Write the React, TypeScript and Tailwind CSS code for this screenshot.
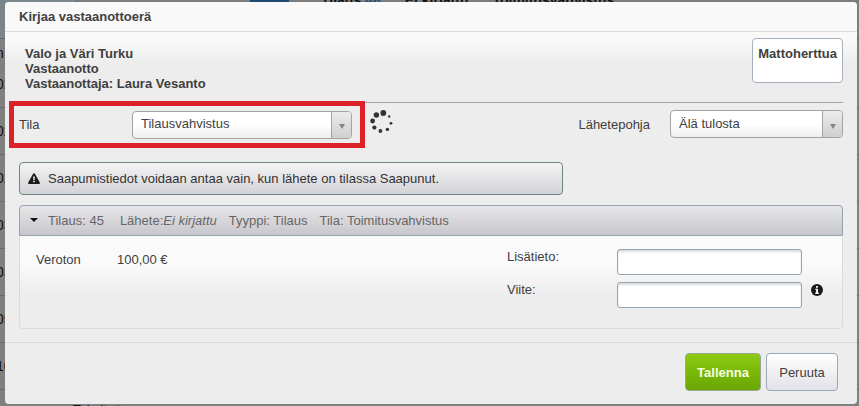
import type { ReactNode } from 'react'
import { useState } from 'react'

// Rows of the list page that stays visible round the edges of the dialog.
const BACKDROP_ROWS = ['02:', '02:', '02:', '03:', '03:', '05:', '10']

export default function App() {
  return (
    <div className="relative min-h-screen overflow-hidden bg-[#808080] font-['Liberation_Sans',Arial,sans-serif] text-[13px] leading-[15px] text-[#404040]">
      <Backdrop />
      <ReceiveDialog />
    </div>
  )
}

function Backdrop() {
  return (
    <div aria-hidden="true" className="absolute inset-0 overflow-hidden text-[#111]">
      <div className="flex h-[39px] border-b border-[#666] bg-[#7b858c]">
        <div className="w-[77px] border-r border-[#666]" />
        <div className="w-[173px] bg-[#7d7d7d]" />
        <div className="h-full w-[39px] bg-[#1d4a70]" />
        <div className="-mt-2 flex flex-1 gap-6 bg-[#7d7d7d] pl-8 text-[14px] leading-4 font-bold">
          <span>
            Tilaus <span className="text-[#1d4a70]">48</span>
          </span>
          <span>Ei kirjattu</span>
          <span>Toimitusvahvistus</span>
        </div>
      </div>
      <div className="flex h-[22px] items-end">
        <span className="-ml-1 text-[14px]">n</span>
      </div>
      {BACKDROP_ROWS.map((text, i) => (
        <div key={i} className="flex h-[47px] items-center border-b border-[#6a6a6a]">
          <span className="-ml-1 text-[14px]">{text}</span>
        </div>
      ))}
      <div className="pt-3 pl-[73px]">Toimitettu</div>
    </div>
  )
}

function ReceiveDialog() {
  const [lisatieto, setLisatieto] = useState('')
  const [viite, setViite] = useState('')

  return (
    <div
      role="dialog"
      aria-modal="true"
      aria-labelledby="dialog-title"
      className="relative mt-[2px] mr-[2px] ml-[5px] rounded-[4px] bg-[#ededed]"
    >
      <header className="rounded-t-[4px] border-b border-[#dcdcdc] bg-[#f9f9f9] px-3.5 pt-[7px] pb-[7px]">
        <h1 id="dialog-title" className="font-bold">
          Kirjaa vastaanottoerä
        </h1>
      </header>

      <div className="bg-linear-to-b from-[#f9f9f9] from-[8px] to-[#ededed] to-[32px] px-3.5 pt-1.5 pb-[13px]">
        <div className="flex items-start justify-between">
          <div className="px-1.5 pt-2 font-bold">
            <p>Valo ja Väri Turku</p>
            <p>Vastaanotto</p>
            <p>Vastaanottaja: Laura Vesanto</p>
          </div>
          <div className="h-[45px] rounded-[4px] border border-[#a4b0bb] bg-white px-[5px] pt-[7px] font-bold">
            Mattoherttua
          </div>
        </div>

        {/* the ring round the status field reaches over the rule */}
        <div className="mt-[11px] flex h-[47px] items-start justify-between border-t border-[#a6a6a6]">
          <div className="-mt-[2px] -ml-2.5 flex items-start">
            <div className="flex h-[47px] items-center border-[5px] border-[#dc2128] pr-2 pl-[5px]">
              <label htmlFor="tila" className="w-[113px]">
                Tila
              </label>
              <Select id="tila" value="Tilausvahvistus" className="w-[220px]" />
            </div>
            <Spinner />
          </div>
          <div className="mt-[7px] flex items-center">
            <label htmlFor="pohja" className="mr-5">
              Lähetepohja
            </label>
            <Select id="pohja" value="Älä tulosta" className="w-[173px]" />
          </div>
        </div>

        <p
          role="alert"
          className="mt-[13px] flex h-[33px] w-[544px] items-center gap-2 rounded-[4px] border border-[#6f8585] bg-linear-to-b from-[#f3f3f4] to-[#d4d4d8] px-2 pb-px text-[#333]"
        >
          <WarningIcon />
          Saapumistiedot voidaan antaa vain, kun lähete on tilassa Saapunut.
        </p>

        <section className="mt-2.5">
          <button
            type="button"
            aria-expanded="true"
            className="flex h-[31px] w-full items-center rounded-t-[4px] border border-[#92a2b0] bg-linear-to-b from-[#e7e7e9] to-[#c6c6cc] px-2.5 pb-px text-left text-[#666]"
          >
            <svg viewBox="0 0 8 4" className="mr-2.5 h-1 w-2" aria-hidden="true">
              <path d="M0 0h8L4 4z" fill="#111" />
            </svg>
            <span className="mr-4">Tilaus: 45</span>
            <span className="mr-3">
              Lähete:<em>Ei kirjattu</em>
            </span>
            <span className="mr-3">Tyyppi: Tilaus</span>
            <span>Tila: Toimitusvahvistus</span>
          </button>
          <div className="flex h-[93px] justify-between rounded-b-[4px] border border-t-0 border-[#dadada] bg-linear-to-b from-[#fafafa] from-30% to-[#ededed] to-65% px-4">
            <dl className="flex pt-4">
              <dt className="w-[81px]">Veroton</dt>
              <dd>100,00 €</dd>
            </dl>
            <div className="flex w-[319px] flex-col gap-[7px] pt-[13px]">
              <Field id="lisatieto" label="Lisätieto:" value={lisatieto} onChange={setLisatieto} />
              <Field id="viite" label="Viite:" value={viite} onChange={setViite}>
                <InfoIcon />
              </Field>
            </div>
          </div>
        </section>
      </div>

      <footer className="flex justify-end gap-[5px] border-t border-[#dadada] px-[19px] pt-2.5 pb-[13px]">
        <button
          type="button"
          className="h-[38px] w-[76px] rounded-[4px] border border-[#98a890] bg-linear-to-b from-[#8ccb10] to-[#6aa604] font-bold text-[#f4ffe0]"
        >
          Tallenna
        </button>
        <button
          type="button"
          className="h-[38px] w-[72px] rounded-[4px] border border-[#9aa9b6] bg-linear-to-b from-white to-[#e2e2e8]"
        >
          Peruuta
        </button>
      </footer>
    </div>
  )
}

function Select({ id, value, className }: { id: string; value: string; className: string }) {
  return (
    <div
      className={`relative flex h-7 rounded-[4px] border border-[#a3a3a3] bg-linear-to-b from-white from-50% to-[#eee] ${className}`}
    >
      <select id={id} defaultValue={value} className="w-full appearance-none bg-transparent pr-6 pb-0.5 pl-2 outline-none">
        <option>{value}</option>
      </select>
      <span className="pointer-events-none absolute inset-y-0 right-0 flex w-5 items-center justify-center rounded-r-[3px] border-l border-[#a3a3a3] bg-linear-to-b from-[#ececec] to-[#cfcfcf]">
        <svg viewBox="0 0 6 5" className="mt-1 h-[5px] w-1.5" aria-hidden="true">
          <path d="M0 0h6L3 5z" fill="#858585" />
        </svg>
      </span>
    </div>
  )
}

function Field({
  id,
  label,
  value,
  onChange,
  children,
}: {
  id: string
  label: string
  value: string
  onChange: (value: string) => void
  children?: ReactNode
}) {
  return (
    <div className="flex items-start">
      <label htmlFor={id} className="w-[110px]">
        {label}
      </label>
      <input
        id={id}
        type="text"
        value={value}
        onChange={(event) => onChange(event.target.value)}
        className="h-[26px] w-[185px] rounded-[3px] border border-[#93a5b3] bg-white px-1.5 shadow-[inset_0_2px_2px_#ddd] outline-none"
      />
      {children}
    </div>
  )
}

function Spinner() {
  return (
    <svg viewBox="0 0 24 24" className="mt-2 ml-1 size-6" fill="#333" role="img" aria-label="Ladataan">
      <circle cx="14.3" cy="4" r="2.9" />
      <circle cx="7.4" cy="6" r="2.7" />
      <circle cx="3.6" cy="12" r="2.4" />
      <circle cx="5.4" cy="18.600" r="2.1" />
      <circle cx="11.4" cy="22" r="1.900" />
      <circle cx="18.4" cy="20.4" r="1.7" />
      <circle cx="22" cy="14.3" r="1.4" />
      <circle cx="20.2" cy="7.4" r="1.2" />
    </svg>
  )
}

function WarningIcon() {
  return (
    <svg viewBox="0 0 12 11" className="h-[11px] w-3 shrink-0" aria-hidden="true">
      <path
        d="M6 .2c.4 0 .7.2.9.6l4.9 8.8c.4.7 0 1.3-.8 1.3H1c-.8 0-1.2-.6-.8-1.3L5.1.8C5.3.4 5.6.2 6 .2z"
        fill="#1c1c1c"
      />
      <path d="M5.1 3.6h1.800l-.3 3.400H5.400zM5.200 7.800h1.600v1.500H5.200z" fill="#eee" />
    </svg>
  )
}

function InfoIcon() {
  return (
    <svg viewBox="0 0 12 12" className="mt-0.5 ml-[9px] size-3 shrink-0" role="img" aria-label="Lisätietoja">
      <circle cx="6" cy="6" r="6" fill="#1a1a1a" />
      <path d="M5 2h2v1.700H5zM4.300 4.700H7v3.800h.8v1.400H4.200V8.500H5V6h-.7z" fill="#eee" />
    </svg>
  )
}
